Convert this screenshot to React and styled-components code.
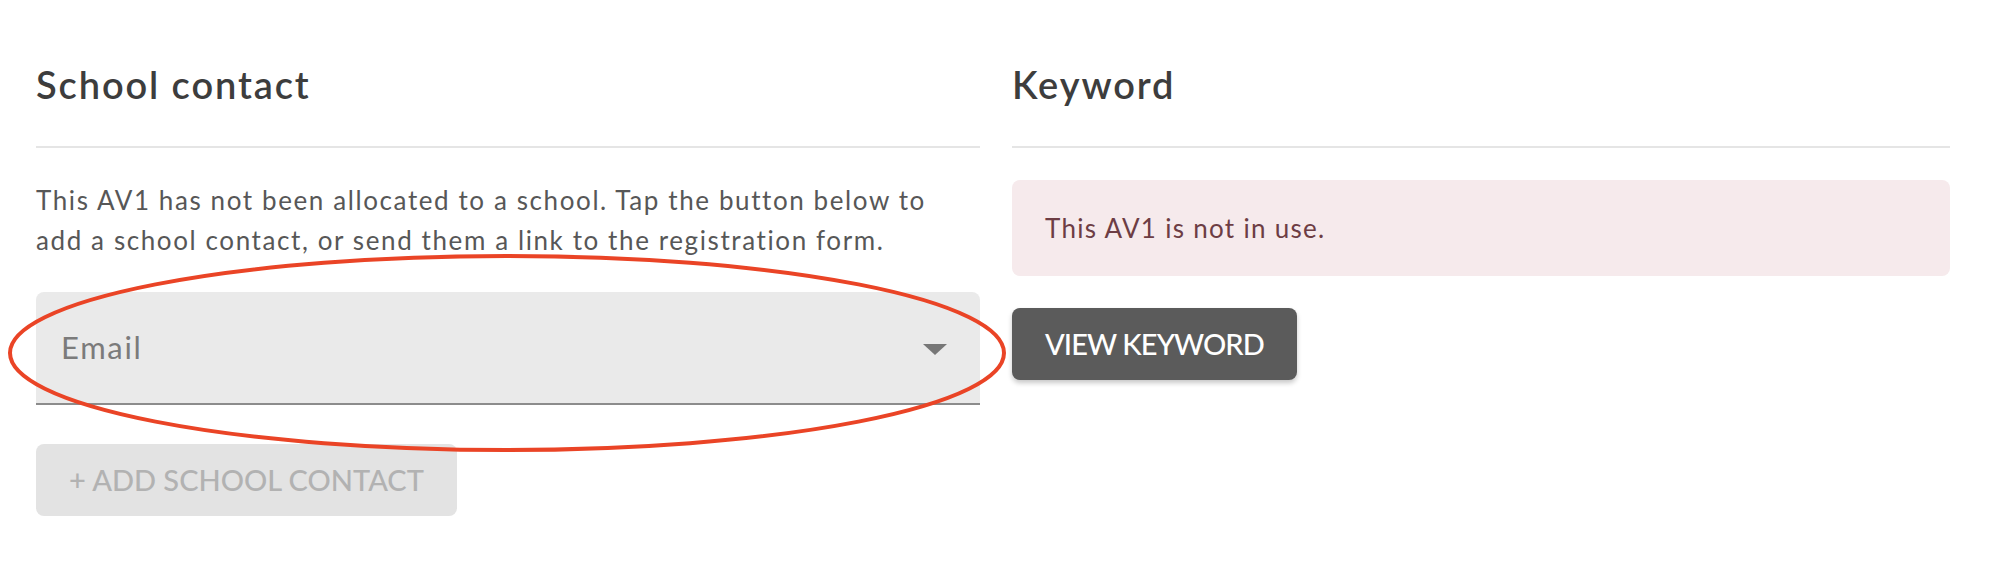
import React from 'react';
import styled, { createGlobalStyle } from 'styled-components';

const GlobalStyle = createGlobalStyle`
  html, body {
    margin: 0;
    padding: 0;
    background: #ffffff;
  }
  body {
    font-family: 'Lato', 'Noto Sans', sans-serif;
  }
`;

const Page = styled.div`
  position: relative;
  display: grid;
  grid-template-columns: 944px 1fr;
  column-gap: 32px;
  padding: 62px 46px 0 36px;
  height: 586px;
  box-sizing: border-box;
`;

const Column = styled.section`
  display: flex;
  flex-direction: column;
  align-items: flex-start;
`;

const Heading = styled.h2`
  align-self: stretch;
  margin: 0 0 32px;
  padding-bottom: 38px;
  border-bottom: 2px solid #e5e5e5;
  font-size: 38px;
  line-height: 1.2;
  font-weight: 600;
  letter-spacing: 1.9px;
  color: #3d3d3d;
`;

const Text = styled.p`
  margin: 0 0 32px;
  font-size: 26px;
  line-height: 40px;
  letter-spacing: 1.6px;
  color: #575757;
`;

const SelectBox = styled.div`
  align-self: stretch;
  display: flex;
  align-items: center;
  justify-content: space-between;
  height: 111px;
  padding: 0 33px 0 25px;
  background: #eaeaea;
  border-bottom: 2px solid #8c8c8c;
  border-radius: 8px 8px 0 0;
  font-size: 31px;
  letter-spacing: 1.7px;
  color: #7b7b7b;
  margin-bottom: 39px;
`;

const Caret = styled.span`
  width: 0;
  height: 0;
  border-left: 12px solid transparent;
  border-right: 12px solid transparent;
  border-top: 11px solid #777777;
  margin-top: 4px;
`;

const Button = styled.button`
  height: 72px;
  padding: 0 33px;
  border: none;
  border-radius: 8px;
  font-family: inherit;
  font-size: 29px;
  font-weight: 500;
  text-transform: uppercase;
  letter-spacing: ${(p) => (p.$dark ? '-0.9px' : '0')};
  background: ${(p) => (p.$dark ? '#5b5b5b' : '#e3e3e3')};
  color: ${(p) => (p.$dark ? '#ffffff' : '#b2b2b2')};
  box-shadow: ${(p) => (p.$dark ? '0 3px 5px rgba(0, 0, 0, 0.22)' : 'none')};
`;

const Notice = styled.div`
  align-self: stretch;
  padding: 28px 33px;
  margin-bottom: 32px;
  background: #f6eaec;
  border-radius: 8px;
  font-size: 26px;
  line-height: 40px;
  letter-spacing: 1.3px;
  color: #6d3d44;
`;

const Annotation = styled.svg`
  position: absolute;
  top: 0;
  left: 0;
  pointer-events: none;
`;

export default function App() {
  return (
    <>
      <GlobalStyle />
      <Page>
        <Column>
          <Heading>School contact</Heading>
          <Text>
            This AV1 has not been allocated to a school. Tap the button below to
            <br />
            add a school contact, or send them a link to the registration form.
          </Text>
          <SelectBox>
            <span>Email</span>
            <Caret />
          </SelectBox>
          <Button disabled>+ Add school contact</Button>
        </Column>
        <Column>
          <Heading>Keyword</Heading>
          <Notice>This AV1 is not in use.</Notice>
          <Button $dark>View keyword</Button>
        </Column>
        <Annotation width="1996" height="586" viewBox="0 0 1996 586">
          <ellipse cx="507" cy="353" rx="497" ry="97" fill="none" stroke="#ea4426" strokeWidth="4" />
        </Annotation>
      </Page>
    </>
  );
}
